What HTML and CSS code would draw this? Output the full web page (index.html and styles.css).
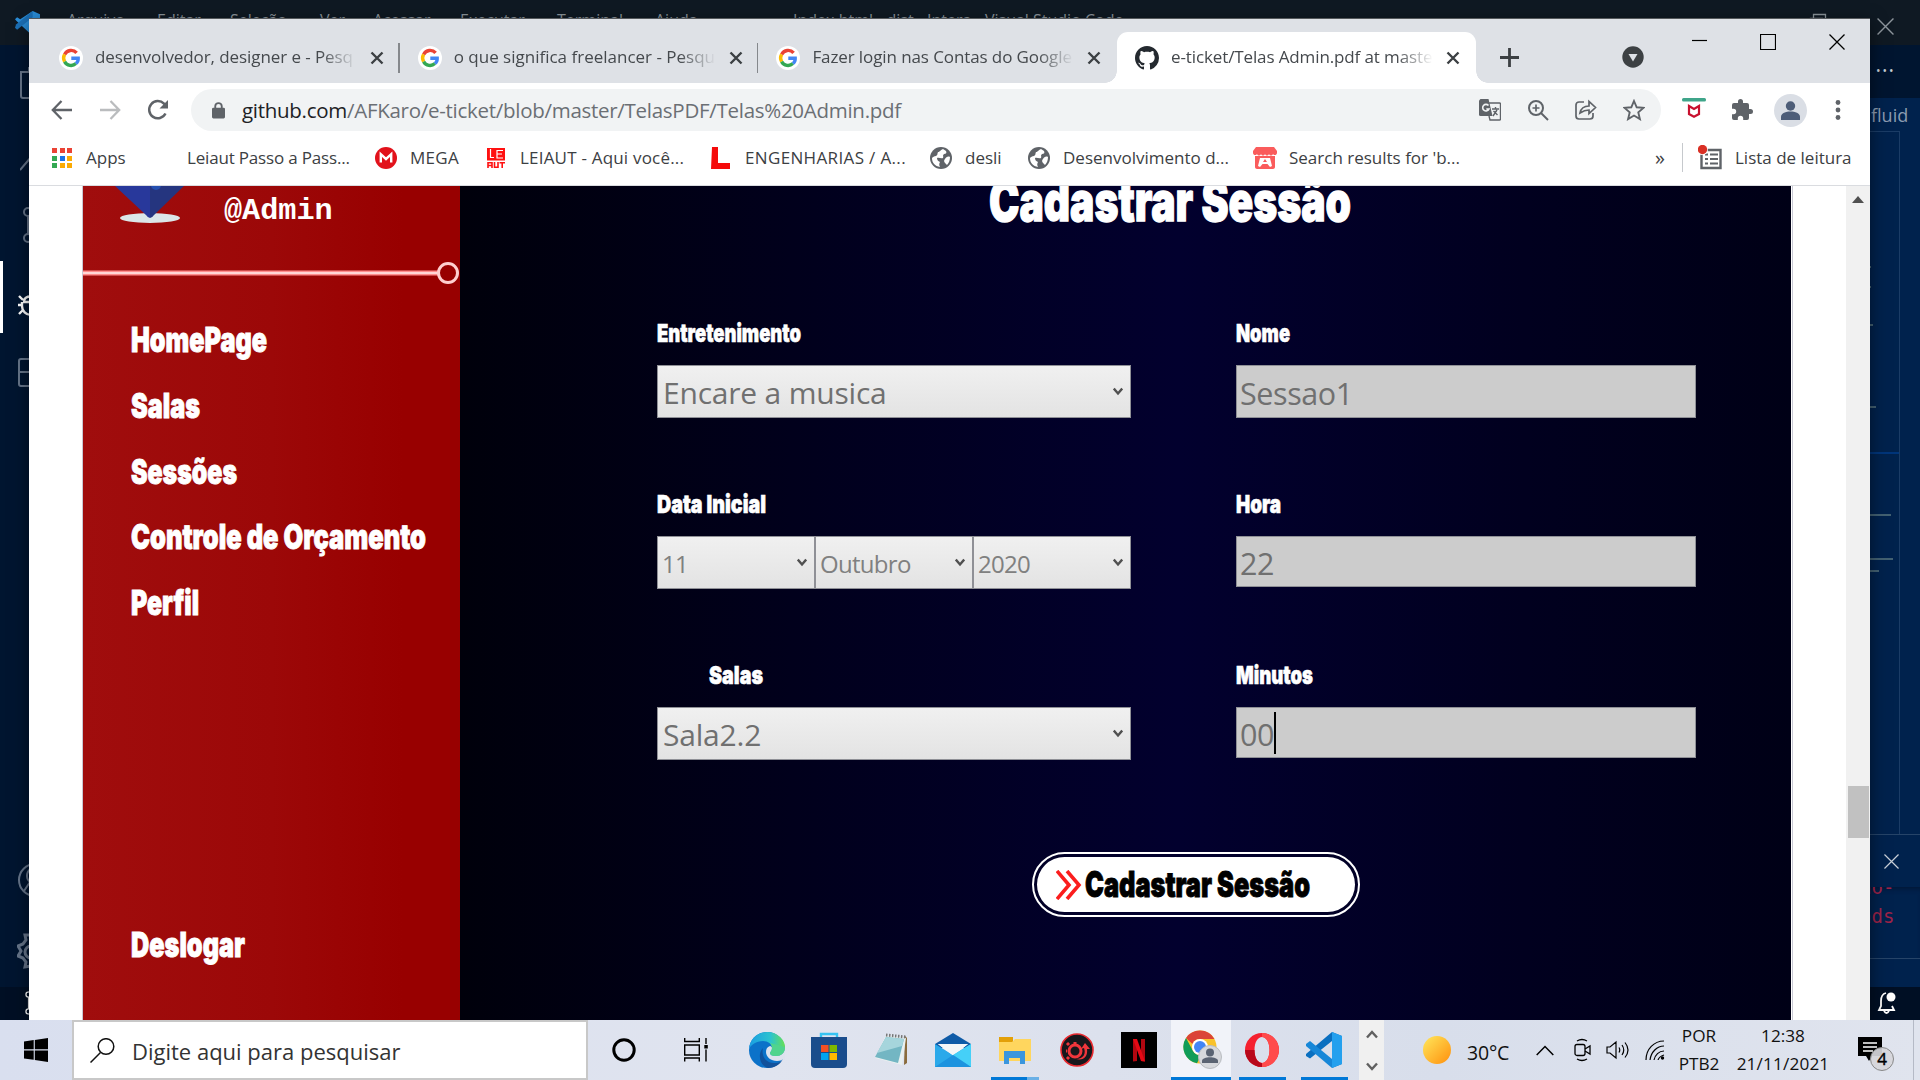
FILE: index.html
```html
<!DOCTYPE html>
<html lang="pt-BR">
<head>
<meta charset="utf-8">
<title>e-ticket/Telas Admin.pdf</title>
<link rel="stylesheet" href="styles.css">
</head>
<body>
<svg class="defs" width="0" height="0">
  <symbol id="google" viewBox="0 0 24 24"><circle cx="12" cy="12" r="12" fill="#fff"/><g fill="none" stroke-width="3.4"><path d="M17.6 6.9A7.3 7.3 0 0 0 5.6 8.4" stroke="#ea4335"/><path d="M5.6 8.4a7.3 7.3 0 0 0 0 7.2" stroke="#fbbc05"/><path d="M5.6 15.6a7.3 7.3 0 0 0 11.3 2" stroke="#34a853"/><path d="M16.9 17.6c1.7-1.5 2.4-3.4 2.3-5.3H12.3" stroke="#4285f4"/></g></symbol>
  <symbol id="x" viewBox="0 0 14 14"><path d="M1.5 1.5l11 11m0-11l-11 11" stroke="#3c4043" stroke-width="2.4" fill="none"/></symbol>
  <symbol id="thinx" viewBox="0 0 16 16"><path d="M.5.5l15 15m0-15l-15 15" stroke="currentColor" stroke-width="1.3" fill="none"/></symbol>
  <symbol id="globe" viewBox="0 0 22 22"><circle cx="11" cy="11" r="11" fill="#5f6368"/><path d="M13 2c-3 1-3 3-5 3-1 2 0 3-2 4-2 0-3 1-4 2 0 5 3 8 8 9-1-2-1-3 0-5-2-1-3-2-3-4 2-1 4 1 6 0 1-2-1-2 1-4 2 0 3-1 2-3zM20 10c-2-1-4 0-5 2-2 2 0 4 1 5l1 1c2-2 3-5 3-8z" fill="#fff"/></symbol>
  <symbol id="down" viewBox="0 0 10 9"><path d="M.8 1.500L5 6.500l4.200-5" stroke="#505050" stroke-width="2.400" fill="none"/></symbol>
  <symbol id="branch" viewBox="0 0 26 36"><g fill="none" stroke="currentColor" stroke-width="2"><circle cx="7" cy="5" r="4"/><circle cx="7" cy="31" r="4"/><circle cx="21" cy="10" r="4"/><path d="M7 9v18M21 14c0 7-14 4-14 12"/></g></symbol>
</svg>

<div class="vscode">
  <div class="vs-title">
    <svg class="vs-logo" width="25" height="25" viewBox="0 0 24 24"><path d="M17 0l7 3v18l-7 3L1.500 9.500 0 8l2-2 3 2z" fill="#2a8dd8"/><path d="M0 16l2 2L17 6V0L1 13z" fill="#1b6fb5"/></svg>
    <span class="m1">Arquivo</span><span class="m2">Editar</span><span class="m3">Seleção</span><span class="m4">Ver</span><span class="m5">Acessar</span><span class="m6">Executar</span><span class="m7">Terminal</span><span class="m8">Ajuda</span><span class="m9">Index.html - dist - Intera - Visual Studio Code</span>
    <svg class="vs-restore" width="18" height="18"><path d="M1.500 5.500h12v12h-12zM4.500 5V1.500h12v12H14" fill="none" stroke="#8d959c" stroke-width="1.300"/></svg>
    <svg class="vs-close" width="17" height="19"><use href="#thinx"/></svg>
  </div>
  <div class="vs-body">
    <div class="activity">
      <svg class="a1" width="36" height="36"><path d="M1 6h18v26H3a2 2 0 0 1-2-2zM9 6V1" fill="none" stroke="currentColor" stroke-width="2"/></svg>
      <svg class="a2" width="36" height="40"><path d="M0 36L12 22M20 2a11 11 0 0 0-9 14" fill="none" stroke="currentColor" stroke-width="2"/></svg>
      <svg class="a3" width="26" height="36"><use href="#branch"/></svg>
      <div class="active"><svg width="36" height="40" viewBox="0 0 36 40"><path d="M5 12l-4-4M5 17H0M5 22l-4 4M5 14h20M4 14v4a9 9 0 0 0 18 0v-4M6 13c1-6 12-6 14 0" fill="none" stroke="#fff" stroke-width="2.400"/></svg></div>
      <svg class="a5" width="36" height="32"><path d="M22 1H3a2 2 0 0 0-2 2v23a2 2 0 0 0 2 2h19M1 14h21M20 1v27" fill="none" stroke="currentColor" stroke-width="2"/></svg>
      <svg class="a6" width="36" height="36" viewBox="0 0 36 36"><circle cx="18" cy="18" r="16" fill="none" stroke="currentColor" stroke-width="2"/><path d="M7 29l6-9a8 8 0 0 1 3-14" fill="none" stroke="currentColor" stroke-width="2"/></svg>
      <svg class="a7" width="36" height="36" viewBox="0 0 36 36"><path d="M14 2l-6 0 1 5-3 4-5 2 3 5-3 5 5 2 3 4-1 5 6-1M14 13a6 6 0 0 0 0 12" fill="none" stroke="currentColor" stroke-width="3"/></svg>
    </div>
    <div class="editor">
      <div class="ed-tabs">•••</div>
      <div class="ed-crumb">fluid</div>
      <div class="ed-code"><div class="mini">
        <i class="k1"></i><i class="k1"></i><i class="k2"></i><i class="k3"></i><i class="hl"></i><i class="g1"></i><i class="g2"></i><i class="g3"></i>
      </div></div>
      <div class="panel-head"><svg width="15" height="15"><use href="#thinx"/></svg></div>
      <div class="panel-body"><span>ao-</span><span>nds</span></div>
      <div class="panel-foot"></div>
    </div>
  </div>
  <div class="vs-status">
    <svg width="17" height="24" viewBox="0 0 26 36"><use href="#branch"/></svg>
    <svg width="20" height="24" viewBox="0 0 20 24"><path d="M9 2C5 3 4 6 4 10v5l-2 4h15l-2-4M7 20q2.500 4 5 0" fill="none" stroke="#fff" stroke-width="1.800"/><circle cx="14" cy="6" r="4.500" fill="#fff"/></svg>
  </div>
</div>

<div class="browser">
  <div class="tabstrip">
    <div class="tab"><svg width="24" height="24"><use href="#google"/></svg><span class="t t1">desenvolvedor, designer e - Pesq</span><svg width="14" height="14"><use href="#x"/></svg></div>
    <div class="tab"><svg width="24" height="24"><use href="#google"/></svg><span class="t t2">o que significa freelancer - Pesqu</span><svg width="14" height="14"><use href="#x"/></svg></div>
    <div class="tab last"><svg width="24" height="24"><use href="#google"/></svg><span class="t t3">Fazer login nas Contas do Google</span><svg width="14" height="14"><use href="#x"/></svg></div>
    <div class="tab on"><svg width="24" height="24" viewBox="0 0 16 16"><path fill="#24292f" d="M8 0C3.580 0 0 3.580 0 8c0 3.540 2.290 6.530 5.470 7.590.4.070.55-.17.55-.38 0-.19-.01-.82-.01-1.490-2.010.37-2.530-.49-2.690-.94-.09-.23-.48-.94-.82-1.130-.28-.15-.68-.52-.01-.53.63-.01 1.080.58 1.230.82.72 1.210 1.870.87 2.330.66.070-.52.28-.87.51-1.070-1.780-.2-3.640-.89-3.640-3.950 0-.87.31-1.590.82-2.150-.08-.2-.36-1.020.08-2.120 0 0 .67-.21 2.200.82.640-.18 1.320-.27 2-.27s1.360.09 2 .27c1.530-1.040 2.200-.82 2.200-.82.440 1.100.160 1.920.080 2.120.510.560.820 1.270.820 2.150 0 3.070-1.870 3.750-3.650 3.950.290.250.540.730.540 1.480 0 1.070-.01 1.930-.01 2.200 0 .210.150.460.550.380A8.010 8.010 0 0 0 16 8c0-4.420-3.580-8-8-8z"/></svg><span class="t t4">e-ticket/Telas Admin.pdf at maste</span><svg width="14" height="14"><use href="#x"/></svg></div>
    <svg class="plus" width="19" height="19"><path d="M9.500 0v19M0 9.500h19" stroke="#3c4043" stroke-width="2.800"/></svg>
    <svg class="tsearch" width="22" height="22"><circle cx="11" cy="11" r="10.700" fill="#3c4043"/><path d="M6.500 8h9L11 15.500z" fill="#dee1e6"/></svg>
    <div class="winbtns">
      <svg width="15" height="16"><path d="M0 6.500h15" stroke="#000" stroke-width="1.200"/></svg>
      <svg width="16" height="16"><path d="M.5.500h15v15H.5z" fill="none" stroke="#000" stroke-width="1.200"/></svg>
      <svg width="16" height="16"><use href="#thinx"/></svg>
    </div>
  </div>
  <div class="toolbar">
    <svg width="22" height="22" viewBox="0 0 22 22"><path d="M21 11H2M10.500 2L1.800 11l8.700 9" fill="none" stroke="#5f6368" stroke-width="2.300"/></svg>
    <svg width="22" height="22" viewBox="0 0 22 22"><path d="M1 11h19M11.500 2l8.700 9-8.700 9" fill="none" stroke="#babcbe" stroke-width="2.300"/></svg>
    <svg width="22" height="22" viewBox="0 0 22 22"><path d="M18.500 14.500A8.600 8.600 0 1 1 17 4.700l2 2.300" fill="none" stroke="#5f6368" stroke-width="2.500"/><path d="M21 1v8.500h-8.500z" fill="#5f6368"/></svg>
    <div class="omni">
      <svg width="13" height="17" viewBox="0 0 14 18"><path d="M3.500 8V4.500a3.500 3.500 0 0 1 7 0V8" fill="none" stroke="#5f6368" stroke-width="2"/><rect x="0" y="6" width="14" height="11.500" rx="1.500" fill="#5f6368"/></svg>
      <span class="url"><b>github.com</b>/AFKaro/e-ticket/blob/master/TelasPDF/Telas%20Admin.pdf</span>
      <svg width="22" height="22" viewBox="0 0 22 22"><path d="M1.500 0h8l4 17h-12A1.500 1.500 0 0 1 0 15.500v-14z" fill="#5f6368"/><path d="M10 4h10.500a1 1 0 0 1 1 1v15a1 1 0 0 1-1 1H11l-1-4M13 10h7M16.500 8v2M14 17l4-6M14.500 12l4 4" fill="none" stroke="#5f6368" stroke-width="1.400"/><path d="M9.500 6.500a3.300 3.300 0 1 0 .5 3.500H7.300" fill="none" stroke="#f1f3f4" stroke-width="1.600"/></svg>
      <svg width="22" height="22" viewBox="0 0 22 22"><g fill="none" stroke="#5f6368" stroke-width="2"><circle cx="9" cy="9" r="7"/><path d="M14 14l7 7"/><path d="M5.500 9h7M9 5.500v7" stroke-width="1.700"/></g></svg>
      <svg width="22" height="22" viewBox="0 0 22 22"><g fill="none" stroke="#5f6368" stroke-width="1.700"><path d="M9 3H4a3 3 0 0 0-3 3v11a3 3 0 0 0 3 3h11a3 3 0 0 0 3-3v-3M5 14c1-5 4-7 9-7V2.500l6.500 6-6.500 6V11c-4 0-6 1-9 3z"/></g></svg>
      <svg width="22" height="22" viewBox="0 0 22 22"><path d="M11 2l2.700 6.300 6.800.6-5.200 4.500 1.600 6.700L11 16.500l-5.900 3.600 1.600-6.700L1.500 8.900l6.800-.6z" fill="none" stroke="#5f6368" stroke-width="1.900"/></svg>
    </div>
    <svg width="24" height="24" viewBox="0 0 24 24"><rect width="24" height="3.600" rx="1.500" fill="#3fa58a"/><path d="M7 8v8l5 2.700 5-2.700V8L12 11z" fill="none" stroke="#c8102e" stroke-width="2.200"/></svg>
    <svg width="24" height="24" viewBox="0 0 24 24"><path d="M20.500 11H19V7a2 2 0 0 0-2-2h-4V3.500a2.500 2.500 0 0 0-5 0V5H4a2 2 0 0 0-2 2v3.800h1.500a2.700 2.700 0 0 1 0 5.400H2V20a2 2 0 0 0 2 2h3.800v-1.500a2.700 2.700 0 0 1 5.400 0V22H17a2 2 0 0 0 2-2v-4h1.500a2.500 2.500 0 0 0 0-5z" fill="#5f6368"/></svg>
    <svg width="33" height="33" viewBox="0 0 33 33"><circle cx="16.500" cy="16.500" r="16.500" fill="#dadee5"/><circle cx="16.500" cy="12" r="4.700" fill="#4d5d78"/><path d="M7 26v-3c0-4 5-5.500 9.500-5.500S26 19 26 23v3z" fill="#4d5d78"/></svg>
    <svg width="6" height="20"><g fill="#5f6368"><circle cx="3" cy="2.500" r="2.400"/><circle cx="3" cy="10" r="2.400"/><circle cx="3" cy="17.500" r="2.400"/></g></svg>
  </div>
  <div class="bookmarks">
    <svg width="20" height="20"><path d="M0 0h5v5H0zM8 0h5v5H8zM15 0h5v5h-5z" fill="#ea4335"/><path d="M0 8h5v5H0zM0 15h5v5H0z" fill="#34a853"/><path d="M8 8h5v5H8z" fill="#1a73e8"/><path d="M15 8h5v5h-5zM8 15h5v5H8zM15 15h5v5h-5z" fill="#fbab04"/></svg>
    <span class="b0">Apps</span>
    <span class="b1">Leiaut Passo a Pass...</span>
    <svg width="22" height="22" viewBox="0 0 22 22"><circle cx="11" cy="11" r="11" fill="#e2121b"/><path d="M5.800 15.500V7.200L11 12l5.200-4.800v8.300" fill="none" stroke="#fff" stroke-width="2.400"/></svg>
    <span class="b2">MEGA</span>
    <svg width="18" height="20"><path d="M0 0h18v12.500H0z" fill="#f11"/><path d="M3.500 1v8.500h3.500M16 2.500h-6v7.500h6M10 6h5" stroke="#fff" stroke-width="1.200" fill="none"/><path d="M1 20v-5.200h4V20M1 17.500h4M7.500 14v5.200h3.500V14M12.500 14.800h5.500M15.200 14v6" stroke="#f11" stroke-width="1.600" fill="none"/></svg>
    <span class="b3">LEIAUT - Aqui você...</span>
    <svg width="20" height="22"><path d="M1 0h6v16h12v6H0z" fill="#f50a0a"/></svg>
    <span class="b4">ENGENHARIAS / A...</span>
    <svg width="22" height="22"><use href="#globe"/></svg>
    <span class="b5">desli</span>
    <svg width="22" height="22"><use href="#globe"/></svg>
    <span class="b6">Desenvolvimento d...</span>
    <svg width="24" height="22" viewBox="0 0 24 22"><path d="M3 0h18l3 4v2c0 2-3 3-4 1-1 2-3 2-4 0-1 2-3 2-4 0-1 2-3 2-4 0-1 2-3 2-4 0-1 2-4 1-4-1V4zM2 9h20v11c0 1-1 2-2 2H4c-1 0-2-1-2-2z" fill="#fa5c5c"/><path d="M7 11h10l2 8-2 1-2.500-3h-5L7 20l-2-1z" fill="#fff"/><path d="M12 12l2 3h-4z" fill="#fa5c5c"/></svg>
    <span class="b7">Search results for 'b...</span>
    <span class="more">»</span>
    <span class="vsep"></span>
    <svg class="rl" width="24" height="26" viewBox="0 0 24 26"><path d="M3.500 5h19v18h-19z" fill="none" stroke="#5f6368" stroke-width="2.400"/><path d="M7 9.500h3M12 9.500h8M7 14h3M12 14h8M7 18.500h3M12 18.500h8" stroke="#5f6368" stroke-width="2"/><circle cx="4.500" cy="4.500" r="5.500" fill="#fff"/><circle cx="4.500" cy="4.500" r="4.700" fill="#d93025"/></svg>
    <span class="b8">Lista de leitura</span>
  </div>
  <div class="content">
    <div class="page">
      <aside>
        <div class="user">
          <svg width="72" height="38"><ellipse cx="36" cy="32" rx="30" ry="5" fill="#dbe6e8"/><path d="M1 0h35v32q-2 0-4-3z" fill="#28389b"/><path d="M36 0h34L40 29q-2 3-4 3z" fill="#25357f"/><circle cx="42" cy="-1" r="5" fill="#2450b0"/></svg>
          <span>@Admin</span>
        </div>
        <svg class="rule" width="377" height="24"><path d="M0 12h355" stroke="#ff8f8f" stroke-width="5"/><path d="M0 12h355" stroke="#ffd6d6" stroke-width="2"/><circle cx="365" cy="12" r="9.500" fill="none" stroke="#ffcfcf" stroke-width="3"/></svg>
        <nav>
          <svg class="imp" width="136" height="32"><text x="0" y="25.500" textLength="136" lengthAdjust="spacingAndGlyphs">HomePage</text></svg>
          <svg class="imp" width="69" height="32"><text x="0" y="25.500" textLength="69" lengthAdjust="spacingAndGlyphs">Salas</text></svg>
          <svg class="imp" width="106" height="32"><text x="0" y="25.500" textLength="106" lengthAdjust="spacingAndGlyphs">Sessões</text></svg>
          <svg class="imp" width="295" height="32"><text x="0" y="25.500" textLength="295" lengthAdjust="spacingAndGlyphs">Controle de Orçamento</text></svg>
          <svg class="imp" width="68" height="32"><text x="0" y="25.500" textLength="68" lengthAdjust="spacingAndGlyphs">Perfil</text></svg>
        </nav>
        <svg class="imp out" width="114" height="32"><text x="0" y="25.500" textLength="114" lengthAdjust="spacingAndGlyphs">Deslogar</text></svg>
      </aside>
      <main>
        <svg class="imp title" width="362" height="40"><text x="0" y="34.500" textLength="362" lengthAdjust="spacingAndGlyphs">Cadastrar Sessão</text></svg>
        <div class="form">
          <div class="cell"><svg class="imp lab" width="144" height="24"><text x="0" y="20" textLength="144" lengthAdjust="spacingAndGlyphs">Entretenimento</text></svg>
            <div class="sel s1"><span>Encare a musica</span><svg width="10" height="9"><use href="#down"/></svg></div></div>
          <div class="cell"><svg class="imp lab" width="54" height="24"><text x="0" y="20" textLength="54" lengthAdjust="spacingAndGlyphs">Nome</text></svg>
            <div class="inp tall"><span>Sessao1</span></div></div>
          <div class="cell"><svg class="imp lab" width="109" height="24"><text x="0" y="20" textLength="109" lengthAdjust="spacingAndGlyphs">Data Inicial</text></svg>
            <div class="dates">
              <div class="sel"><span>11</span><svg width="10" height="9"><use href="#down"/></svg></div>
              <div class="sel"><span>Outubro</span><svg width="10" height="9"><use href="#down"/></svg></div>
              <div class="sel"><span>2020</span><svg width="10" height="9"><use href="#down"/></svg></div>
            </div></div>
          <div class="cell"><svg class="imp lab" width="45" height="24"><text x="0" y="20" textLength="45" lengthAdjust="spacingAndGlyphs">Hora</text></svg>
            <div class="inp"><span>22</span></div></div>
          <div class="cell"><svg class="imp lab in" width="54" height="24"><text x="0" y="20" textLength="54" lengthAdjust="spacingAndGlyphs">Salas</text></svg>
            <div class="sel s1"><span>Sala2.2</span><svg width="10" height="9"><use href="#down"/></svg></div></div>
          <div class="cell"><svg class="imp lab" width="77" height="24"><text x="0" y="20" textLength="77" lengthAdjust="spacingAndGlyphs">Minutos</text></svg>
            <div class="inp"><span>00</span><i class="caret"></i></div></div>
        </div>
        <div class="btn"><div class="btn-in">
          <svg width="26" height="30" viewBox="0 0 26 30"><path d="M1 1l12 14L1 29M11 1l12 14L11 29" fill="none" stroke="#fb1d1d" stroke-width="3.600"/></svg>
          <svg class="imp dark" width="225" height="34"><text x="0" y="29" textLength="225" lengthAdjust="spacingAndGlyphs">Cadastrar Sessão</text></svg>
        </div></div>
      </main>
    </div>
    <div class="scroll"><svg width="12" height="7"><path d="M0 7l6-7 6 7z" fill="#505050"/></svg><div class="thumb"></div></div>
  </div>
</div>

<div class="taskbar">
  <svg class="start" width="24" height="24" viewBox="0 0 24 24"><path d="M0 3.400L9.700 2v9.300H0zM10.800 1.900L24 0v11.300H10.800zM0 12.500h9.700v9.300L0 20.500zM10.800 12.500H24V24l-13.200-1.900z"/></svg>
  <div class="search"><svg width="25" height="25" viewBox="0 0 25 25"><g fill="none" stroke="#111" stroke-width="1.500"><circle cx="16" cy="8.500" r="7.800"/><path d="M10.500 14.500L.5 24.500"/></g></svg><span>Digite aqui para pesquisar</span></div>
  <div class="slot w72"><svg width="24" height="24"><circle cx="12" cy="12" r="10.200" fill="none" stroke="#000" stroke-width="3"/></svg></div>
  <div class="slot w72"><svg width="24" height="24"><path d="M.7 0v3.500h14.600V0M.7 7h14.600v10H.7zM.7 23.500V20h14.600v3.500M22 0v6M22 11.500v12" fill="none" stroke="#000" stroke-width="1.400"/><path d="M20.300 7h3.500v3.500h-3.500z"/></svg></div>
  <div class="slot edge"><svg width="36" height="36" viewBox="0 0 36 36"><defs><linearGradient id="eg" x1="0" x2="1"><stop offset="0" stop-color="#1b9de2"/><stop offset=".6" stop-color="#2cc3cf"/><stop offset="1" stop-color="#66e054"/></linearGradient></defs><circle cx="18" cy="18" r="18" fill="#0c72c9"/><path d="M0 17C1 7 8 0 18 0c11 0 18 8 18 15 0 6-4 9-9 9-4 0-6-1-6-3 0-1 2-2 2-5 0-4-4-7-9-7C7 9 2 13 0 17z" fill="url(#eg)"/><path d="M14 16c-2 8 3 16 13 15 3 0 6-2 7-4-3 6-9 9-15 9C11 34 8 22 14 16z" fill="#12529c"/><path d="M36 15c0 6-4 9-9 9-4 0-6-1-6-3 0-1 2-2 2-5 0-1-1-2-2-2-3 1-4 3-4 6 0 5 5 9 11 9 3 0 5-1 6-2l3 2V15z" fill="#dde2ee"/><path d="M36 15c0 6-4 9-9 9-4 0-6-1-6-3 0-1 2-2 2-5 0-2-1-4-2-5z" fill="#50d48d"/></svg></div>
  <div class="slot"><svg width="36" height="36" viewBox="0 0 36 36"><path d="M10 6V2h16v4" fill="none" stroke="#35c3f2" stroke-width="2.400"/><path d="M0 5h36v27a4 4 0 0 1-4 4H4a4 4 0 0 1-4-4z" fill="#1a4d8c"/><path d="M10 13h7.500v7H10z" fill="#f25022"/><path d="M18.500 13H26v7h-7.500z" fill="#7fba00"/><path d="M10 21h7.500v7H10z" fill="#00a4ef"/><path d="M18.500 21H26v7h-7.500z" fill="#ffb900"/></svg></div>
  <div class="slot"><svg width="34" height="34" viewBox="0 0 34 34"><path d="M31 3l2 2v25l-3 2z" fill="#8a6b3c"/><path d="M12 2l20 3-4 27L1 25z" fill="#e9f0f0"/><path d="M12 4l18 2-6 24L1 24z" fill="#73b6c3"/><path d="M12 4l18 2-2 7L3 20z" fill="#a6d5dc"/><path d="M12 2l20 2" stroke="#777" stroke-width="3" stroke-dasharray="1.500 1.500"/></svg></div>
  <div class="slot"><svg width="36" height="34" viewBox="0 0 36 34"><path d="M0 11L18 0l18 11v4H0z" fill="#0f5ba7"/><path d="M3 11h30L18 23z" fill="#f4f6f8"/><path d="M0 11l18 11L36 11v23H0z" fill="#2aa9ea"/><path d="M3 11h30L18 22.500z" fill="#f4f6f8"/><path d="M36 11v23L18 22z" fill="#45d0f8"/><path d="M18 22l18 12H0z" fill="#1c93df"/></svg></div>
  <div class="slot files"><svg width="32" height="28" viewBox="0 0 32 28"><path d="M0 1h14v6H0z" fill="#e3a008"/><path d="M0 6h13l3-3h16v22H0z" fill="#ffd65e"/><path d="M5 28V15h21v13h-5v-6H10v6z" fill="#3a96dd"/></svg></div>
  <div class="slot"><svg width="34" height="34" viewBox="0 0 34 34"><circle cx="17" cy="17" r="16" fill="#17181c" stroke="#e8292e" stroke-width="1.600"/><circle cx="15" cy="18" r="6" fill="none" stroke="#f0363c" stroke-width="3"/><path d="M15 9v3M7 18h-1M9 12l-2-2M9 24l-2 2" stroke="#f0363c" stroke-width="3"/><path d="M16 26c8 0 10-6 8-11l-3 1 4-6 5 6h-3c1 7-3 12-11 10z" fill="#f0363c"/></svg></div>
  <div class="slot"><svg width="36" height="36" viewBox="0 0 36 36"><path d="M0 0h36v36H0z"/><path d="M12 7h4v22l-4 .5zM20 7h4v22.500l-4-.5z" fill="#b20710"/><path d="M12 7h4l8 22.500-4-.5z" fill="#e50914"/></svg></div>
  <div class="slot chrome"><svg width="40" height="40" viewBox="0 0 40 40"><circle cx="17" cy="17" r="16.500" fill="#f9c22b"/><path d="M17 .5A16.500 16.500 0 0 1 31.500 9H17a8 8 0 0 0-7.500 5L3 8A16.500 16.500 0 0 1 17 .5z" fill="#db4437"/><path d="M3 8l7 13a8 8 0 0 0 8 4l-4 8.300A16.500 16.500 0 0 1 3 8z" fill="#0f9d58"/><circle cx="17" cy="17" r="8" fill="#fff"/><circle cx="17" cy="17" r="6" fill="#4285f4"/><circle cx="27" cy="27" r="11.500" fill="#d6d8dc" stroke="#b9bcc1"/><circle cx="27" cy="22.500" r="4" fill="#5a6372"/><path d="M19 33v-2c0-5 16-5 16 0v2z" fill="#5a6372"/></svg></div>
  <div class="slot opera"><svg width="34" height="34" viewBox="0 0 34 34"><path fill-rule="evenodd" d="M17 0a17 17 0 0 1 0 34 17 17 0 0 1 0-34zm0 4c-4 0-7.500 5-7.500 13S13 30 17 30s7.500-5 7.500-13S21 4 17 4z" fill="#f5202f"/><path d="M17 0a17 17 0 0 1 0 34c-3 0-5-1-7-2l3-4c1 1 3 2 4 2 4 0 7.500-5 7.500-13S21 4 17 4z" fill="#ff4b4b"/><path d="M0 17c0 9 7 17 17 17v-4c-4 0-7.500-5-7.500-13z" fill="#b8081a"/></svg></div>
  <div class="slot code"><svg width="36" height="36" viewBox="0 0 36 36"><path d="M26 0l10 4v28l-10 4V9L4 26.500 0 24v-2z" fill="#0a6fc0"/><path d="M0 12l4-3 22 18v9L0 14z" fill="#1787d8"/><path d="M26 0l10 4v28l-10 4z" fill="#24a0ee"/></svg></div>
  <div class="updn"><svg width="12" height="9"><path d="M1 7.500l5-5.500 5 5.500" fill="none" stroke="#606060" stroke-width="2.400"/></svg><svg width="12" height="9"><path d="M1 1.500L6 7l5-5.500" fill="none" stroke="#606060" stroke-width="2.400"/></svg></div>
  <svg class="sun" width="28" height="28"><defs><linearGradient id="sg" x1="0" y1="0" x2="1" y2="1"><stop offset="0" stop-color="#ffe85c"/><stop offset="1" stop-color="#ff8f0c"/></linearGradient></defs><circle cx="14" cy="14" r="14" fill="url(#sg)"/></svg>
  <span class="temp">30°C</span>
  <svg class="up" width="18" height="11"><path d="M.7 10L9 1.500 17.300 10" fill="none" stroke="#000" stroke-width="1.500"/></svg>
  <svg class="cam" width="18" height="24"><g fill="none" stroke="#000" stroke-width="1.300"><rect x="1" y="6.500" width="10" height="11" rx="2"/><path d="M11 11l5-3v8l-5-3M3 3q5-3 10 0M3 21q5 3 10 0"/></g></svg>
  <svg class="spk" width="24" height="20"><g fill="none" stroke="#000" stroke-width="1.200"><path d="M1 7v6h3l6 5V2L4 7zM13 7.500q1.500 2.500 0 5M16 5q3.500 5 0 10M19 2.500q6 7.500 0 15"/></g></svg>
  <svg class="wifi" width="20" height="20"><g fill="none" stroke="#000" stroke-width="1.200"><path d="M1 20C1 9 9 1 19 1M5 20C6 12 12 6 19 6M9 20c1-5 5-9 10-9M13 20c1-3 3-4 6-5"/></g><circle cx="17.500" cy="18" r="1.700"/></svg>
  <div class="two lang"><span>POR</span><span>PTB2</span></div>
  <div class="two clock"><span>12:38</span><span class="dt">21/11/2021</span></div>
  <div class="note"><svg width="24" height="28"><path d="M0 0h24v19H14l-3 5-3-5H0z"/><path d="M5 6h14M5 10h14M5 14h10" stroke="#fff" stroke-width="1.400"/></svg><span class="badge">4</span></div>
  <span class="peek"></span>
</div>
</body>
</html>
```
FILE: styles.css
```css
* { box-sizing: border-box; }
body { margin: 0; width: 1920px; height: 1080px; overflow: hidden; position: relative; font-family: "Open Sans", "Noto Sans", sans-serif; background: #00224d; }
svg { display: block; flex: none; }
span { white-space: nowrap; }
.defs { position: absolute; }

/* editor window behind the browser */
.vscode { position: absolute; inset: 0 0 60px 0; display: flex; flex-direction: column; color: #9aa3ac; }
.vs-title { height: 45px; background: #0f1923; display: grid; grid-template-columns: 52px 90px 73px 90px 53px 87px 97px 98px 142px 1fr 68px 43px; padding-left: 15px; font-size: 16px; color: #8d959c; }
.vs-title span { line-height: 22px; padding-top: 9px; }
.vs-logo { margin-top: 11px; }
.vs-title .m1 { grid-column: 2; }
.vs-title .m9 { margin-left: -4px; }
.vs-restore { margin: 13px 0 0 0; }
.vs-close { margin-top: 17px; }
.vs-body { flex: 1; display: flex; justify-content: space-between; min-height: 0; }
.activity { width: 72px; background: #001530; color: #66758a; display: flex; flex-direction: column; padding-left: 20px; }
.a1 { margin-top: 21px; }
.a2 { margin-top: 32px; }
.a3 { margin: 33px 0 18px 1px; }
.active { height: 72px; margin: 0 0 0 -20px; padding: 27px 0 0 15px; border-left: 3px solid #fff; }
.a5 { margin-top: 25px; margin-left: -2px; }
.a6 { margin-top: 472px; margin-left: -3px; }
.a7 { margin-top: 35px; margin-left: -3px; }
.editor { width: 70px; display: flex; flex-direction: column; }
.ed-tabs { height: 53px; background: #001530; padding: 13px 0 0 26px; font-size: 12px; line-height: 26px; color: #c5ccd3; letter-spacing: 2px; }
.ed-crumb { height: 33px; padding: 4px 0 0 21px; font-size: 18px; line-height: 26px; color: #8b9bb1; }
.ed-code { height: 703px; display: flex; padding-left: 20px; }
.mini { width: 30px; border-right: 1px solid #1b3c66; border-top: 1px solid #1b3c66; display: flex; flex-direction: column; align-items: flex-start; }
.mini i { height: 2px; width: 3px; background: #6f8c8c; opacity: .6; margin-top: 50px; }
.mini .k1 { margin-top: 134px; width: 1px; }
.mini .k1 + .k1 { margin-top: 18px; }
.mini .k2 { margin-top: 36px; }
.mini .k3 { margin-top: 80px; width: 6px; }
.mini .hl { margin-top: 44px; width: 100%; background: #00357a; opacity: 1; }
.mini .g1 { margin-top: 60px; width: 21px; }
.mini .g2 { margin-top: 42px; width: 23px; }
.mini .g3 { margin-top: 10px; width: 9px; }
.panel-head { height: 53px; border-top: 1px solid #264468; padding: 19px 0 0 34px; color: #c9d0d8; }
.panel-body { height: 72px; border-bottom: 1px solid #264468; box-shadow: inset 0 5px 5px -3px #001737; overflow: hidden; display: flex; flex-direction: column; padding-left: 10px; font: 19px/29px "DejaVu Sans Mono", monospace; color: #9c2348; }
.panel-body span:first-child { margin-top: -14px; }
.panel-foot { flex: 1; }
.vs-status { height: 33px; background: #000f24; display: flex; justify-content: space-between; align-items: center; padding: 0 23px 2px 24px; color: #fff; }

/* browser window */
.browser { position: absolute; left: 29px; top: 18px; width: 1841px; height: 1002px; border-top: 1px solid #55585c; background: #fff; display: flex; flex-direction: column; box-shadow: 0 4px 16px rgba(0,0,0,.5); }
.tabstrip { height: 64px; background: #dee1e6; padding: 13px 0 0 12px; display: flex; }
.tab { width: 358.700px; display: flex; align-items: center; padding-left: 18px; position: relative; flex: none; }
.tab .t { margin: 0 13px 2px 12px; width: 262px; overflow: hidden; font-size: 17px; line-height: 28px; color: #45494d; -webkit-mask-image: linear-gradient(90deg, #000 86%, transparent 100%); mask-image: linear-gradient(90deg, #000 86%, transparent 100%); }
.tab .t1 { letter-spacing: -.08px; }
.tab .t3 { letter-spacing: -.1px; }
.tab .t4 { letter-spacing: -.12px; }
.tab:not(.on):not(.last)::after { content: ""; width: 1.500px; height: 30px; background: #85888c; margin-left: auto; }
.on { background: #fff; border-radius: 11px 11px 0 0; }
.on::before, .on::after { content: ""; position: absolute; bottom: 0; width: 12px; height: 12px; }
.on::before { left: -12px; background: radial-gradient(circle at 0 0, transparent 11.500px, #fff 12px); }
.on::after { right: -12px; background: radial-gradient(circle at 100% 0, transparent 11.500px, #fff 12px); }
.plus { margin: 16px 0 0 24px; }
.tsearch { margin: 14px 0 0 103px; }
.winbtns { display: flex; gap: 53px; margin-left: 48px; padding-top: 2px; }
.toolbar { height: 54px; display: flex; align-items: center; padding: 0 29px 0 22px; }
.toolbar > svg:nth-child(-n+3) { margin-right: 26px; }
.toolbar > svg:nth-child(3) { margin-right: 22px; }
.omni { width: 1470px; height: 42px; border-radius: 21px; background: #f1f3f4; display: flex; align-items: center; padding: 0 16px 0 21px; gap: 26px; margin-right: 21px; }
.omni > svg:first-child { margin-right: -9px; }
.url { margin-right: auto; font-size: 20.500px; letter-spacing: -.28px; color: #6b6f74; line-height: 30px; }
.url b { font-weight: 400; color: #202124; }
.toolbar > svg:nth-of-type(4) { margin-right: 24px; }
.toolbar > svg:nth-of-type(5) { margin-right: 20px; }
.toolbar > svg:nth-of-type(6) { margin-right: 28px; }
.bookmarks { height: 49px; border-bottom: 1px solid #dadce0; display: flex; align-items: center; padding-left: 23px; font-size: 17px; line-height: 24px; color: #3c4043; flex: none; padding-bottom: 7px; }
.bookmarks span { flex: none; }
.b0 { width: 101px; margin-left: 14px; }
.b1 { width: 188px; letter-spacing: -.18px; }
.b2 { width: 77px; margin-left: 13px; letter-spacing: .3px; }
.b3 { width: 191px; margin-left: 15px; letter-spacing: .2px; }
.b4 { width: 185px; margin-left: 14px; letter-spacing: .35px; }
.b5 { width: 63px; margin-left: 13px; }
.b6 { width: 190px; margin-left: 13px; }
.b7 { width: 366px; margin-left: 12px; }
.more { width: 27px; font-size: 20px; }
.vsep { width: 1px; height: 29px; background: #c6c9cd; }
.rl { margin: 0 13px 0 15px; }
.content { flex: 1; display: flex; min-height: 0; overflow: hidden; justify-content: space-between; padding-left: 50px; }
.page { width: 1714px; padding-left: 3px; border-right: 1px solid #c9c9d4; display: flex; }
.scroll { width: 24px; background: #f1f1f1; padding-top: 10px; display: flex; flex-direction: column; align-items: center; }
.thumb { width: 21px; height: 52px; background: #c1c1c1; margin-top: 583px; }

/* document shown in the viewer */
.imp { overflow: visible; fill: #fff; stroke: #fff; stroke-width: .9px; font: 900 34px Inter, Roboto, sans-serif; }
.imp.lab { font-size: 25px; stroke-width: .6px; }
.imp.title { font-size: 55px; stroke-width: 1.300px; margin-left: 529px; }
.imp.dark { fill: #000; stroke: #000; font-size: 35px; margin-left: 3px; }
aside { width: 378px; height: 834px; border-left: 1px solid #c9c9d4; background: linear-gradient(90deg, #a00d0d, #9c0808 50%, #980000 85%); display: flex; flex-direction: column; }
.user { height: 75px; display: flex; padding-left: 31px; }
.user span { margin-left: 38px; font: bold 30.200px/34px "Courier New", "Liberation Mono", monospace; padding-top: 8px; color: #fff; }
nav { display: flex; flex-direction: column; gap: 33.800px; margin: 41px 0 0 48px; }
.out { margin: 310px 0 0 48px; }
main { width: 1331px; height: 834px; background: linear-gradient(90deg, #00000b, #01001c 25%, #02002e 54%, #01001f 80%, #000016); display: flex; flex-direction: column; }
.form { display: grid; grid-template-columns: 474px 460px; column-gap: 105px; row-gap: 75.200px; margin: 96px 0 0 197px; }
.cell { height: 96px; }
.lab.in { margin-left: 52px; }
.sel, .inp { height: 53px; margin-top: 19px; border: 1.500px solid #8f9096; color: #707070; display: flex; align-items: center; font-size: 30.500px; line-height: 48px; padding-left: 5px; padding-right: 7px; }
.sel { justify-content: space-between; background: linear-gradient(#f0f0f0, #e3e3e3); }
.sel span { padding-top: 2px; }
.s1 span { font-size: 30px; letter-spacing: -.2px; padding-top: 3px; }
.inp { height: 51px; background: #ccc; padding-left: 3px; }
.inp.tall { height: 53px; }
.inp span { padding-top: 2px; letter-spacing: -.4px; }
.caret { width: 2px; height: 42px; background: #000; }
.dates { display: flex; margin-top: 19px; }
.dates .sel { flex: 1; margin: 0; font-size: 24px; letter-spacing: -.7px; color: #808080; padding-left: 4px; }
.btn { margin: 92px 0 0 572px; width: 328px; height: 65px; border: 2.500px solid #fff; border-radius: 33px; padding: 3px; }
.btn-in { height: 100%; border-radius: 28px; background: #fff; display: flex; align-items: center; padding-left: 19px; }

/* taskbar */
.taskbar { position: absolute; left: 0; top: 1020px; width: 1920px; height: 60px; background: linear-gradient(90deg, #d9dfef, #e0e4ef 40%, #d8deeb 75%, #e0e4ee); display: flex; align-items: center; color: #111; }
.start { margin: 0 24px; }
.search { width: 516px; height: 60px; border: 2px solid #c8c8c8; background: #fff; display: flex; align-items: center; padding-left: 16px; font-size: 22px; color: #333; }
.search span { margin-left: 17px; padding-top: 2px; }
.slot { width: 62px; height: 60px; display: flex; align-items: center; justify-content: center; flex: none; }
.w72 { width: 72px; }
.edge { margin-left: 4px; }
.files { background: linear-gradient(90deg, #0078d7 36px, #6ab0e6 36px) 7px 57px / 48px 3px no-repeat; }
.chrome { width: 60px; background: linear-gradient(#0078d7, #0078d7) 0 57px / 60px 3px no-repeat, #f1f3f9; padding-left: 4px; margin-left: 1px; }
.opera, .code { background: linear-gradient(#0078d7, #0078d7) 8px 57px / 47px 3px no-repeat; }
.updn { width: 25px; height: 60px; background: #f0f0f0; margin-left: 4px; display: flex; flex-direction: column; align-items: center; justify-content: space-between; padding: 10px 0 9px; }
.sun { margin-left: 39px; }
.temp { margin-left: 16px; width: 42px; font-size: 19.500px; letter-spacing: -.2px; padding-top: 4px; }
.up { margin-left: 27px; }
.cam { margin-left: 20px; }
.spk { margin-left: 14px; }
.wifi { margin-left: 15px; }
.two { display: flex; flex-direction: column; align-items: center; font-size: 17.200px; line-height: 28px; }
.lang { width: 60px; margin-left: 4px; }
.clock { width: 110px; margin-left: -1px; }
.dt { letter-spacing: .15px; }
.note { position: relative; margin-left: 20px; padding-top: 2px; }
.badge { position: absolute; left: 12px; top: 12px; width: 24px; height: 24px; border: 1px solid #888; border-radius: 50%; background: rgba(214,214,218,.92); font-size: 17px; line-height: 22px; text-align: center; color: #000; -webkit-text-stroke: .4px #000; }
.peek { width: 1px; height: 60px; background: #b5bac6; margin-left: auto; margin-right: 6px; }
```
